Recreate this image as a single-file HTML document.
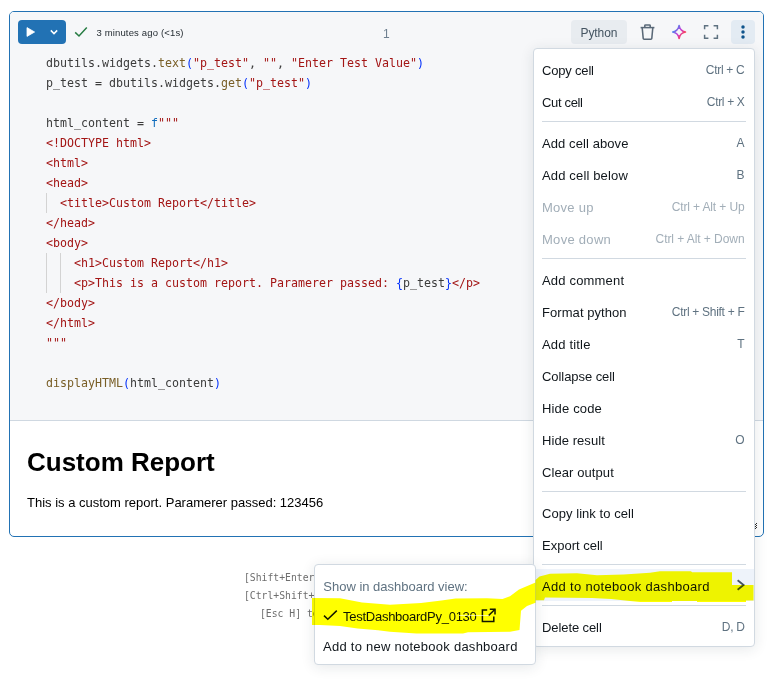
<!DOCTYPE html>
<html><head><meta charset="utf-8"><title>Notebook cell</title>
<style>
html,body{margin:0;padding:0;background:#fff;}
body{width:769px;height:681px;position:relative;overflow:hidden;font-family:"Liberation Sans", sans-serif;font-size:13px;color:#11171c;}
.abs{position:absolute;}
#cell{position:absolute;left:9px;top:11px;width:753px;height:524px;border:1px solid #2272b4;border-radius:5px;background:#fff;overflow:hidden;}
#codearea{position:absolute;left:0;top:0;width:753px;height:408px;background:#f6f7f9;border-bottom:1px solid #cfd8e1;}
#runbtn{position:absolute;left:18px;top:20px;width:48px;height:24px;border-radius:4px;background:#2272b4;}
.code{position:absolute;left:46px;top:53px;font-family:"DejaVu Sans Mono", "Liberation Mono", monospace;font-size:11.63px;letter-spacing:0;line-height:20px;white-space:pre;color:#3b3b3b;}
.code div{height:20px;}
.k{color:#3b3b3b;} .f{color:#795e26;} .p{color:#0431fa;} .s{color:#a31515;} .b{color:#0f6cbd;}
.guide{position:absolute;width:1px;background:#d3d3d3;}
#menu{position:absolute;left:533px;top:48px;width:220px;height:597px;border:1px solid #d1d9e1;border-radius:4px;background:#fff;box-shadow:0 2px 14px rgba(27,49,57,.11);}
#sub{position:absolute;left:314px;top:564px;width:220px;height:99px;border:1px solid #d1d9e1;border-radius:4px;background:#fff;box-shadow:0 2px 14px rgba(27,49,57,.11);}
.mi{position:absolute;left:8px;height:20px;line-height:20px;white-space:pre;color:#11171c;}
.mi.dis{color:#a2aeb8;}
.sc{position:absolute;right:9.5px;height:20px;line-height:20px;font-size:12px;white-space:pre;color:#5f7281;text-align:right;}
.sc.dis{color:#a2aeb8;}
.sep{position:absolute;left:8px;width:204px;height:1px;background:#d1d9e1;}
.hint{position:absolute;font-family:"DejaVu Sans Mono", "Liberation Mono", monospace;font-size:9.75px;color:#6e6e6e;white-space:pre;line-height:12px;}
</style></head><body>

<div id="cell"><div id="codearea"></div></div>
<div id="runbtn">
<svg class="abs" style="left:0;top:0" width="48" height="24" viewBox="0 0 48 24"><path d="M9 7.6 L16.6 12 L9 16.4 Z" fill="#fff" stroke="#fff" stroke-width="0.8" stroke-linejoin="round"/><path d="M32.8 10.4 L36 13.6 L39.2 10.4" fill="none" stroke="#fff" stroke-width="1.5" stroke-linecap="butt" stroke-linejoin="miter"/></svg></div>
<svg class="abs" style="left:73px;top:25px" width="16" height="14" viewBox="0 0 16 14"><path d="M2.2 7.4 L6 11 L13.8 2.6" fill="none" stroke="#277c43" stroke-width="1.5"/></svg>
<div class="abs" style="left:96.4px;top:26px;height:14px;line-height:14px;font-size:9.5px;color:#1f272d;white-space:pre"><span style="letter-spacing:0.159px;">3 minutes ago (&lt;1s)</span></div>
<div class="abs" style="left:383px;top:27px;height:14px;line-height:14px;font-size:12px;color:#6f8090;">1</div>
<div class="abs" style="left:571px;top:20px;width:56px;height:24px;border-radius:4px;background:#e8ecf0;"></div>
<div class="abs" style="left:580.6px;top:23px;height:20px;line-height:20px;font-size:12px;color:#445461;white-space:pre"><span style="letter-spacing:-0.112px;">Python</span></div>
<svg class="abs" style="left:639px;top:23.4px" width="17" height="18" viewBox="0 0 17 18"><g fill="none" stroke="#5a6978" stroke-width="1.55" stroke-linejoin="round"><path d="M1.6 4.6 H15.4"/><path d="M5.8 4.4 V2.6 Q5.8 1.9 6.5 1.9 H10.5 Q11.2 1.9 11.2 2.6 V4.4"/><path d="M3.2 4.8 L4.2 15.4 Q4.3 16.2 5.1 16.2 H11.9 Q12.7 16.2 12.8 15.4 L13.8 4.8"/></g></svg>
<svg class="abs" style="left:671px;top:24px" width="16" height="16" viewBox="0 0 16 16"><defs><linearGradient id="sg" x1="0" y1="0.12" x2="1" y2="0.88"><stop offset="0.12" stop-color="#3f8ff0"/><stop offset="0.5" stop-color="#c63ad8"/><stop offset="0.85" stop-color="#ff4550"/></linearGradient></defs><path d="M8.10 1.70 C8.60 4.70 11.40 7.50 14.40 8.00 C11.40 8.50 8.60 11.30 8.10 14.30 C7.60 11.30 4.80 8.50 1.80 8.00 C4.80 7.50 7.60 4.70 8.10 1.70 Z" fill="none" stroke="url(#sg)" stroke-width="1.7" stroke-linejoin="round"/></svg>
<svg class="abs" style="left:703px;top:24px" width="16" height="16" viewBox="0 0 16 16"><g fill="none" stroke="#5f7281" stroke-width="1.5"><path d="M1.6 5.2 V1.8 H5.4"/><path d="M10.6 1.8 H14.4 V5.2"/><path d="M14.4 10.8 V14.2 H10.6"/><path d="M5.4 14.2 H1.6 V10.8"/></g></svg>
<div class="abs" style="left:731px;top:20px;width:24px;height:24px;border-radius:4px;background:#e3ebf3;"></div>
<svg class="abs" style="left:731px;top:20px" width="24" height="24" viewBox="0 0 24 24"><g fill="#0e538b"><circle cx="12" cy="6.9" r="1.75"/><circle cx="12" cy="12" r="1.75"/><circle cx="12" cy="17.1" r="1.75"/></g></svg>
<div class="code"><div><span class="k">dbutils.widgets.</span><span class="f">text</span><span class="p">(</span><span class="s">&quot;p_test&quot;</span><span class="k">, </span><span class="s">&quot;&quot;</span><span class="k">, </span><span class="s">&quot;Enter Test Value&quot;</span><span class="p">)</span></div><div><span class="k">p_test = dbutils.widgets.</span><span class="f">get</span><span class="p">(</span><span class="s">&quot;p_test&quot;</span><span class="p">)</span></div><div></div><div><span class="k">html_content = </span><span class="b">f</span><span class="s">&quot;&quot;&quot;</span></div><div><span class="s">&lt;!DOCTYPE html&gt;</span></div><div><span class="s">&lt;html&gt;</span></div><div><span class="s">&lt;head&gt;</span></div><div><span class="s">  &lt;title&gt;Custom Report&lt;/title&gt;</span></div><div><span class="s">&lt;/head&gt;</span></div><div><span class="s">&lt;body&gt;</span></div><div><span class="s">    &lt;h1&gt;Custom Report&lt;/h1&gt;</span></div><div><span class="s">    &lt;p&gt;This is a custom report. Paramerer passed: </span><span class="p">{</span><span class="k">p_test</span><span class="p">}</span><span class="s">&lt;/p&gt;</span></div><div><span class="s">&lt;/body&gt;</span></div><div><span class="s">&lt;/html&gt;</span></div><div><span class="s">&quot;&quot;&quot;</span></div><div></div><div><span class="f">displayHTML</span><span class="p">(</span><span class="k">html_content</span><span class="p">)</span></div></div>
<div class="guide" style="left:46px;top:193px;height:20px"></div>
<div class="guide" style="left:46px;top:253px;height:40px"></div>
<div class="guide" style="left:60px;top:253px;height:40px"></div>
<div class="abs" style="left:27px;top:447px;font-size:26px;font-weight:bold;line-height:30px;color:#000;white-space:pre">Custom Report</div>
<div class="abs" style="left:27px;top:495px;font-size:13px;line-height:16px;color:#000;white-space:pre">This is a custom report. Paramerer passed: 123456</div>
<div class="hint" style="left:244px;top:572px">[Shift+Enter] to run and move to next cell</div>
<div class="hint" style="left:244px;top:590px">[Ctrl+Shift+P] to open the command palette</div>
<div class="hint" style="left:260px;top:608px">[Esc H] to see all keyboard shortcuts</div>
<div id="menu">
<div class="sep" style="top:72px"></div>
<div class="sep" style="top:209px"></div>
<div class="sep" style="top:442px"></div>
<div class="sep" style="top:515px"></div>
<div class="sep" style="top:556px"></div>
<div class="abs" style="left:0;top:520px;width:220px;height:32px;background:#eef3fa"></div>
<div class="mi" style="top:12px"><span style="letter-spacing:-0.184px;">Copy cell</span></div>
<div class="sc" style="top:11px"><span style="letter-spacing:-0.288px;">Ctrl + C</span></div>
<div class="mi" style="top:44px"><span style="letter-spacing:-0.337px;">Cut cell</span></div>
<div class="sc" style="top:43px"><span style="letter-spacing:-0.335px;">Ctrl + X</span></div>
<div class="mi" style="top:85px"><span style="letter-spacing:0.086px;">Add cell above</span></div>
<div class="sc" style="top:84px"><span style="letter-spacing:0.000px;">A</span></div>
<div class="mi" style="top:117px"><span style="letter-spacing:0.152px;">Add cell below</span></div>
<div class="sc" style="top:116px"><span style="letter-spacing:0.000px;">B</span></div>
<div class="mi dis" style="top:149px"><span style="letter-spacing:0.254px;">Move up</span></div>
<div class="sc dis" style="top:148px"><span style="letter-spacing:-0.122px;">Ctrl + Alt + Up</span></div>
<div class="mi dis" style="top:181px"><span style="letter-spacing:0.289px;">Move down</span></div>
<div class="sc dis" style="top:180px"><span style="letter-spacing:-0.065px;">Ctrl + Alt + Down</span></div>
<div class="mi" style="top:222px"><span style="letter-spacing:0.180px;">Add comment</span></div>
<div class="mi" style="top:254px"><span style="letter-spacing:0.064px;">Format python</span></div>
<div class="sc" style="top:253px"><span style="letter-spacing:-0.291px;">Ctrl + Shift + F</span></div>
<div class="mi" style="top:286px"><span style="letter-spacing:0.177px;">Add title</span></div>
<div class="sc" style="top:285px"><span style="letter-spacing:0.000px;">T</span></div>
<div class="mi" style="top:318px"><span style="letter-spacing:-0.059px;">Collapse cell</span></div>
<div class="mi" style="top:350px"><span style="letter-spacing:0.157px;">Hide code</span></div>
<div class="mi" style="top:382px"><span style="letter-spacing:0.066px;">Hide result</span></div>
<div class="sc" style="top:381px"><span style="letter-spacing:0.000px;">O</span></div>
<div class="mi" style="top:414px"><span style="letter-spacing:0.088px;">Clear output</span></div>
<div class="mi" style="top:455px"><span style="letter-spacing:0.047px;">Copy link to cell</span></div>
<div class="mi" style="top:487px"><span style="letter-spacing:-0.000px;">Export cell</span></div>
<div class="mi" style="top:528px"><span style="letter-spacing:0.323px;">Add to notebook dashboard</span></div>
<svg class="abs" style="left:201px;top:529px" width="12" height="14" viewBox="0 0 12 14"><path d="M2.6 2.2 L8.6 7 L2.6 11.8" fill="none" stroke="#445461" stroke-width="1.8"/></svg>
<div class="mi" style="top:569px"><span style="letter-spacing:-0.090px;">Delete cell</span></div>
<div class="sc" style="top:568px"><span style="letter-spacing:-0.333px;">D, D</span></div>
</div>
<div id="sub">
<div class="mi" style="left:8.3px;top:12px;color:#5f7281"><span style="letter-spacing:-0.006px;">Show in dashboard view:</span></div>
<svg class="abs" style="left:7px;top:43px" width="17" height="14" viewBox="0 0 17 14"><path d="M2 7.6 L5.8 11.2 L14.8 2.6" fill="none" stroke="#11171c" stroke-width="1.5"/></svg>
<div class="mi" style="left:28px;top:42px"><span style="letter-spacing:-0.261px;">TestDashboardPy_0130</span></div>
<svg class="abs" style="left:166px;top:43px" width="15" height="15" viewBox="0 0 15 15"><g fill="none" stroke="#11171c" stroke-width="1.5"><path d="M6.2 2 H1.4 V13.4 H12.8 V8.4"/><path d="M8.8 1.2 H14 V6.4"/><path d="M14 1.2 L7.4 7.8"/></g></svg>
<div class="mi" style="left:8px;top:72px"><span style="letter-spacing:0.257px;">Add to new notebook dashboard</span></div>
</div>
<svg class="abs" style="left:755px;top:523px" width="2" height="6" viewBox="0 0 2 6" shape-rendering="crispEdges"><g fill="#2a2a2a"><rect x="1" y="0" width="1" height="1"/><rect x="0" y="1" width="1" height="1"/><rect x="1" y="2" width="1" height="1"/><rect x="0" y="3" width="1" height="1"/><rect x="1" y="4" width="1" height="1"/><rect x="0" y="5" width="1" height="1"/></g></svg>
<svg class="abs" style="left:0;top:0;mix-blend-mode:multiply;pointer-events:none" width="769" height="681" viewBox="0 0 769 681"><polygon points="312,598 340,598.3 362,602.6 390,604.8 421,603 441.5,600.6 455.5,598.6 487,598.2 502.5,599 510,596.2 519,589.5 535.5,582.5 535.5,602.7 527,606 521,610.7 519.5,630 510,631.8 468,632.3 463,633.4 416.5,633.4 390,631.8 378,630.2 357.6,628.6 340,626 320,625 312,625" fill="#ffff00"/><polygon points="535.5,580 539.5,576.5 550,573.7 577,573.3 597,575.3 623.6,574.4 650,572.8 660,571.2 691,571.2 692,572.2 732,572.2 732,585 753.5,585 753.5,600.5 746,600.5 746,602 697,602 697,601 672,601 672,602 640,602 630,601 611,599 592,598 545,597.5 544,600.3 535.5,600.3" fill="#ffff00"/></svg>
<div class="abs" style="left:459px;top:615px;width:30px;height:1px;background:rgba(255,255,255,.6)"></div>
</body></html>
